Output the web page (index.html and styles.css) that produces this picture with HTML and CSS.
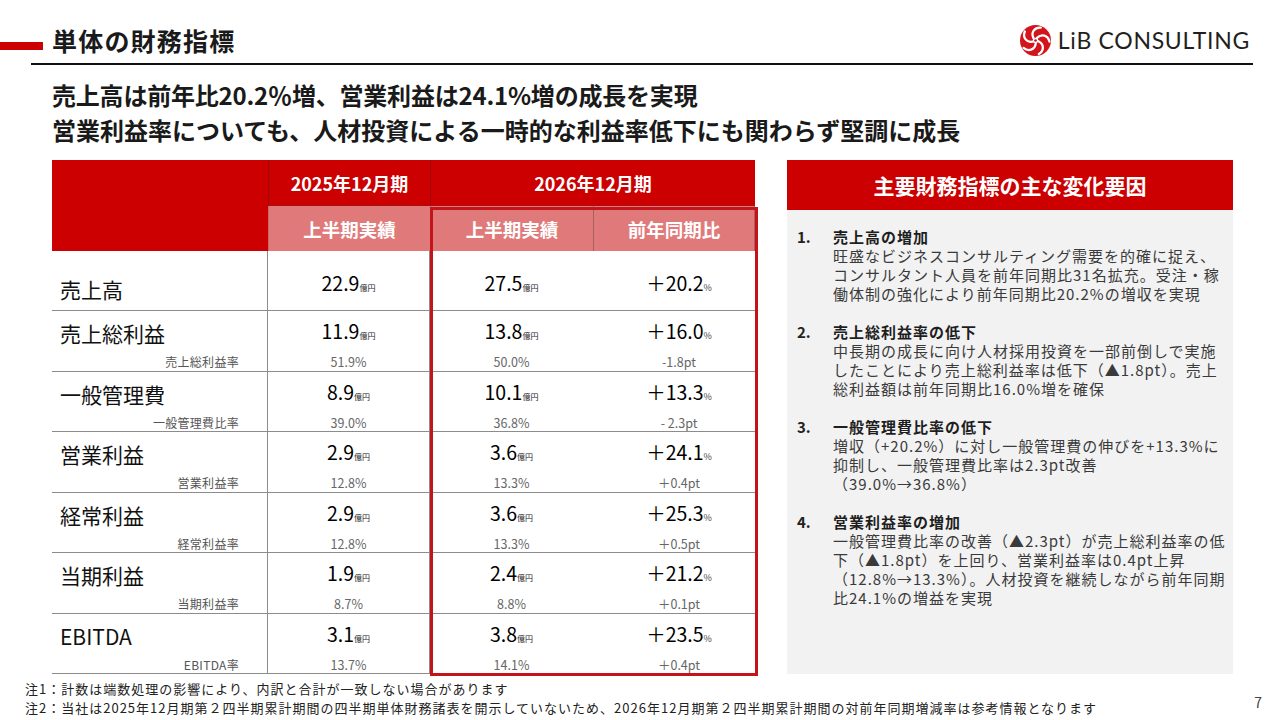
FILE: index.html
```html
<!DOCTYPE html>
<html lang="ja">
<head>
<meta charset="utf-8">
<title>単体の財務指標</title>
<link rel="stylesheet" href="styles.css">
</head>
<body>
<div class="slide">
  <header class="top">
    <div class="title-row">
      <div class="red-bar"></div>
      <h1>単体の財務指標</h1>
      <div class="logo">
        <svg class="logo-mark" width="31" height="31" viewBox="-15 -15 30 30" aria-hidden="true">
          <circle r="15" fill="#d3141b"/>
          <g fill="none" stroke="#fff" stroke-linecap="round">
            <path d="M1.5,-2.5 C6,-7 12,-5 13.5,1" stroke-width="2.2"/>
            <path d="M1.5,-2.5 C6,-7 12,-5 13.5,1" stroke-width="2.2" transform="rotate(72)"/>
            <path d="M1.5,-2.5 C6,-7 12,-5 13.5,1" stroke-width="2.2" transform="rotate(144)"/>
            <path d="M1.5,-2.5 C6,-7 12,-5 13.5,1" stroke-width="2.2" transform="rotate(216)"/>
            <path d="M1.5,-2.5 C6,-7 12,-5 13.5,1" stroke-width="2.2" transform="rotate(288)"/>
          </g>
          <circle r="2.6" fill="#fff"/>
          <circle r="1.3" fill="#d3141b"/>
        </svg>
        <span class="logo-text">LiB CONSULTING</span>
      </div>
    </div>
    <div class="rule"></div>
  </header>

  <section class="lead">
    <p>売上高は前年比20.2％増、営業利益は24.1%増の成長を実現</p>
    <p>営業利益率についても、人材投資による一時的な利益率低下にも関わらず堅調に成長</p>
  </section>

  <main class="main">
    <div class="table-wrap">
      <div class="fin-table">
        <div class="h-blank"></div>
        <div class="h-year">2025年12月期</div>
        <div class="h-year h-year-wide">2026年12月期</div>
        <div class="h-sub">上半期実績</div>
        <div class="h-sub">上半期実績</div>
        <div class="h-sub h-sub-last">前年同期比</div>

        <div class="c-label first"><span class="lbl">売上高</span></div>
        <div class="c-val first"><span class="v"><span class="num">22.9</span><span class="unit">億円</span></span></div>
        <div class="c-val mid first"><span class="v"><span class="num">27.5</span><span class="unit">億円</span></span></div>
        <div class="c-val first last-col"><span class="v"><span class="num">＋20.2</span><span class="unit pct">%</span></span></div>

        <div class="c-label"><span class="lbl">売上総利益</span><span class="sub-lbl">売上総利益率</span></div>
        <div class="c-val"><span class="v"><span class="num">11.9</span><span class="unit">億円</span></span><span class="sv">51.9%</span></div>
        <div class="c-val mid"><span class="v"><span class="num">13.8</span><span class="unit">億円</span></span><span class="sv">50.0%</span></div>
        <div class="c-val last-col"><span class="v"><span class="num">＋16.0</span><span class="unit pct">%</span></span><span class="sv">-1.8pt</span></div>

        <div class="c-label"><span class="lbl">一般管理費</span><span class="sub-lbl">一般管理費比率</span></div>
        <div class="c-val"><span class="v"><span class="num">8.9</span><span class="unit">億円</span></span><span class="sv">39.0%</span></div>
        <div class="c-val mid"><span class="v"><span class="num">10.1</span><span class="unit">億円</span></span><span class="sv">36.8%</span></div>
        <div class="c-val last-col"><span class="v"><span class="num">＋13.3</span><span class="unit pct">%</span></span><span class="sv">- 2.3pt</span></div>

        <div class="c-label"><span class="lbl">営業利益</span><span class="sub-lbl">営業利益率</span></div>
        <div class="c-val"><span class="v"><span class="num">2.9</span><span class="unit">億円</span></span><span class="sv">12.8%</span></div>
        <div class="c-val mid"><span class="v"><span class="num">3.6</span><span class="unit">億円</span></span><span class="sv">13.3%</span></div>
        <div class="c-val last-col"><span class="v"><span class="num">＋24.1</span><span class="unit pct">%</span></span><span class="sv">＋0.4pt</span></div>

        <div class="c-label"><span class="lbl">経常利益</span><span class="sub-lbl">経常利益率</span></div>
        <div class="c-val"><span class="v"><span class="num">2.9</span><span class="unit">億円</span></span><span class="sv">12.8%</span></div>
        <div class="c-val mid"><span class="v"><span class="num">3.6</span><span class="unit">億円</span></span><span class="sv">13.3%</span></div>
        <div class="c-val last-col"><span class="v"><span class="num">＋25.3</span><span class="unit pct">%</span></span><span class="sv">＋0.5pt</span></div>

        <div class="c-label"><span class="lbl">当期利益</span><span class="sub-lbl">当期利益率</span></div>
        <div class="c-val"><span class="v"><span class="num">1.9</span><span class="unit">億円</span></span><span class="sv">8.7%</span></div>
        <div class="c-val mid"><span class="v"><span class="num">2.4</span><span class="unit">億円</span></span><span class="sv">8.8%</span></div>
        <div class="c-val last-col"><span class="v"><span class="num">＋21.2</span><span class="unit pct">%</span></span><span class="sv">＋0.1pt</span></div>

        <div class="c-label"><span class="lbl">EBITDA</span><span class="sub-lbl">EBITDA率</span></div>
        <div class="c-val"><span class="v"><span class="num">3.1</span><span class="unit">億円</span></span><span class="sv">13.7%</span></div>
        <div class="c-val mid"><span class="v"><span class="num">3.8</span><span class="unit">億円</span></span><span class="sv">14.1%</span></div>
        <div class="c-val last-col"><span class="v"><span class="num">＋23.5</span><span class="unit pct">%</span></span><span class="sv">＋0.4pt</span></div>
      </div>
      <div class="table-overlay">
        <div class="highlight-box"></div>
      </div>
    </div>

    <aside class="panel">
      <div class="panel-head">主要財務指標の主な変化要因</div>
      <div class="panel-body">
        <div class="item">
          <div class="item-no">1.</div>
          <div class="item-text">
            <span class="item-title">売上高の増加</span>
            <span class="item-line">旺盛なビジネスコンサルティング需要を的確に捉え、</span>
            <span class="item-line">コンサルタント人員を前年同期比31名拡充。受注・稼</span>
            <span class="item-line">働体制の強化により前年同期比20.2%の増収を実現</span>
          </div>
        </div>
        <div class="item">
          <div class="item-no">2.</div>
          <div class="item-text">
            <span class="item-title">売上総利益率の低下</span>
            <span class="item-line">中長期の成長に向け人材採用投資を一部前倒しで実施</span>
            <span class="item-line">したことにより売上総利益率は低下（▲1.8pt）。売上</span>
            <span class="item-line">総利益額は前年同期比16.0%増を確保</span>
          </div>
        </div>
        <div class="item">
          <div class="item-no">3.</div>
          <div class="item-text">
            <span class="item-title">一般管理費比率の低下</span>
            <span class="item-line">増収（+20.2%）に対し一般管理費の伸びを+13.3%に</span>
            <span class="item-line">抑制し、一般管理費比率は2.3pt改善</span>
            <span class="item-line">（39.0%→36.8%）</span>
          </div>
        </div>
        <div class="item">
          <div class="item-no">4.</div>
          <div class="item-text">
            <span class="item-title">営業利益率の増加</span>
            <span class="item-line">一般管理費比率の改善（▲2.3pt）が売上総利益率の低</span>
            <span class="item-line">下（▲1.8pt）を上回り、営業利益率は0.4pt上昇</span>
            <span class="item-line">（12.8%→13.3%）。人材投資を継続しながら前年同期</span>
            <span class="item-line">比24.1%の増益を実現</span>
          </div>
        </div>
      </div>
    </aside>
  </main>

  <footer class="foot">
    <div class="notes">
      <p>注1：計数は端数処理の影響により、内訳と合計が一致しない場合があります</p>
      <p>注2：当社は2025年12月期第２四半期累計期間の四半期単体財務諸表を開示していないため、2026年12月期第２四半期累計期間の対前年同期増減率は参考情報となります</p>
    </div>
    <div class="page-no">7</div>
  </footer>
</div>
</body>
</html>
```

FILE: styles.css
```css
* { box-sizing: border-box; }
body { margin: 0; background: #fff; }

.slide {
  width: 1280px;
  height: 720px;
  overflow: hidden;
  background: #fff;
  font-family: "Noto Sans CJK JP", "Noto Sans", sans-serif;
  color: #111;
}

/* ---------- header ---------- */
.title-row {
  display: flex;
  align-items: center;
  height: 63px;
  padding-top: 18px;
}
.red-bar {
  flex: none;
  width: 43px;
  height: 8px;
  background: #cc0000;
  margin-top: 11px;
  margin-right: 9px;
}
.title-row h1 {
  margin: 0;
  font-size: 25px;
  font-weight: 700;
  letter-spacing: 1.2px;
  line-height: 45px;
  color: #1a1a1a;
}
.logo {
  margin-left: auto;
  margin-right: 30px;
  display: flex;
  align-items: center;
  gap: 7px;
}
.logo-mark { display: block; margin-left: -3px; }
.logo-text {
  font-family: Lato, "Liberation Sans", sans-serif;
  font-size: 23px;
  color: #231f20;
  letter-spacing: 0.7px;
  line-height: 1;
}
.rule {
  width: 1222px;
  height: 2px;
  margin-left: 31px;
  background: #111;
}

/* ---------- lead ---------- */
.lead {
  padding-left: 52px;
  margin-top: 12px;
}
.lead p {
  margin: 0;
  font-size: 24px;
  line-height: 35px;
  font-weight: 700;
  white-space: nowrap;
  color: #1a1a1a;
}
.lead p:first-child { letter-spacing: -0.2px; }

/* ---------- main ---------- */
.main {
  display: flex;
  gap: 32px;
  padding-left: 52px;
  margin-top: 13px;
}

.table-wrap {
  display: grid;
}
.fin-table,
.table-overlay {
  grid-area: 1 / 1;
  display: grid;
  grid-template-columns: 216px 162px 163px 162px;
  grid-template-rows: 46px 45px 60px repeat(6, 60.5px);
}
.table-overlay {
  z-index: 2;
  pointer-events: none;
}

.h-blank {
  grid-row: span 2;
  background: #cc0000;
}
.h-year {
  background: #cc0000;
  color: #fff;
  font-size: 18px;
  font-weight: 700;
  display: flex;
  align-items: center;
  justify-content: center;
  border-left: 1px solid #9c0a0a;
  border-bottom: 1px solid #a51010;
}
.h-year-wide { grid-column: span 2; }
.h-sub {
  background: #e07a7a;
  color: #fff;
  font-size: 18.5px;
  font-weight: 700;
  display: flex;
  align-items: center;
  justify-content: center;
  border-left: 1px solid #c86a6a;
}
.h-sub-last { border-left: 1px solid #a86060; border-right: 1px solid #a86060; }

.c-label,
.c-val {
  display: flex;
  flex-direction: column;
  border-bottom: 1px solid #8c8c8c;
  padding-top: 8px;
}
.c-label {
  border-right: 1px solid #8c8c8c;
  padding-left: 8px;
  padding-right: 28px;
}
.c-label.first { padding-top: 24px; }
.c-val {
  align-items: center;
  border-right: 1px solid #8c8c8c;
  padding-top: 6px;
}
.c-val.mid { border-right: none; }
.c-val.last-col { border-right: none; padding-left: 10px; }
.c-val.first { padding-top: 18px; }

.lbl {
  font-size: 21px;
  line-height: 28px;
  color: #111;
  white-space: nowrap;
}
.sub-lbl {
  align-self: flex-end;
  margin-top: 7px;
  font-size: 12px;
  line-height: 16px;
  letter-spacing: 0.3px;
  color: #555;
  white-space: nowrap;
}
.v {
  height: 28px;
  line-height: 28px;
  white-space: nowrap;
}
.num {
  font-size: 19.5px;
  font-weight: 400;
  color: #000;
}
.unit {
  font-size: 8px;
  line-height: 1;
  color: #222;
}
.unit.pct { font-size: 9px; color: #444; }
.sv {
  margin-top: 9px;
  font-size: 12.5px;
  line-height: 16px;
  color: #666;
  white-space: nowrap;
}

.highlight-box {
  grid-column: 3 / 5;
  grid-row: 2 / 10;
  border: 3px solid #c3141c;
  margin: 1px -3px -2px 0;
}

/* ---------- side panel ---------- */
.panel {
  width: 446px;
  display: flex;
  flex-direction: column;
}
.panel-head {
  height: 50px;
  flex: none;
  background: #cc0000;
  color: #fff;
  font-size: 21px;
  font-weight: 700;
  display: flex;
  align-items: center;
  justify-content: center;
}
.panel-body {
  flex: 1;
  background: #f2f2f2;
  padding: 17px 0 0 10px;
}
.item {
  display: flex;
  margin-bottom: 19px;
}
.item-no {
  flex: none;
  width: 36px;
  font-size: 15px;
  line-height: 19px;
  font-weight: 700;
  color: #222;
}
.item-text {
  display: flex;
  flex-direction: column;
  font-size: 15px;
  line-height: 19px;
  letter-spacing: 1px;
}
.item-title {
  font-weight: 700;
  color: #1e1e1e;
  white-space: nowrap;
}
.item-line {
  white-space: nowrap;
  color: #3a3a3a;
}

/* ---------- footer ---------- */
.foot {
  display: flex;
  align-items: center;
  padding-left: 25px;
  margin-top: 5px;
}
.notes p {
  margin: 0;
  font-size: 13px;
  line-height: 19px;
  letter-spacing: 1px;
  color: #222;
  white-space: nowrap;
}
.page-no {
  margin-left: auto;
  margin-right: 18px;
  margin-top: 8px;
  font-size: 14px;
  color: #444;
}
```
